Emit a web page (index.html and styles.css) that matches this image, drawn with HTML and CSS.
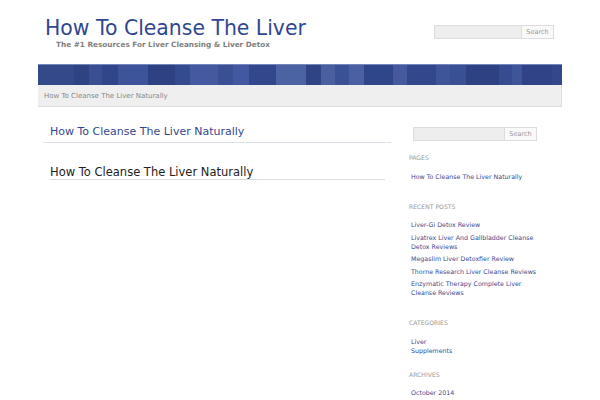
FILE: index.html
```html
<!DOCTYPE html>
<html lang="en">
<head>
    <meta charset="UTF-8">
    <meta name="viewport" content="width=device-width, initial-scale=1.0">
    <title>How To Cleanse The Liver</title>
    <link rel="stylesheet" href="styles.css">
</head>
<body>
    <div class="wrapper">
        <div class="header">
            <div class="branding">
                <h1 class="site-title">How To Cleanse The Liver</h1>
                <p class="site-desc">The #1 Resources For Liver Cleansing &amp; Liver Detox</p>
            </div>
            <form class="search search-header">
                <input type="text" class="search-input">
                <button type="button" class="search-btn">Search</button>
            </form>
        </div>

        <div class="banner"></div>
        <div class="crumbs">How To Cleanse The Liver Naturally</div>

        <div class="columns">
            <div class="main">
                <h2 class="page-title">How To Cleanse The Liver Naturally</h2>
                <h3 class="entry-title">How To Cleanse The Liver Naturally</h3>
            </div>

            <div class="sidebar">
                <form class="search search-side">
                    <input type="text" class="search-input">
                    <button type="button" class="search-btn">Search</button>
                </form>

                <div class="widget widget-first">
                    <h4>Pages</h4>
                    <ul>
                        <li><a href="#">How To Cleanse The Liver Naturally</a></li>
                    </ul>
                </div>

                <div class="widget">
                    <h4>Recent Posts</h4>
                    <ul>
                        <li><a href="#">Liver-Gi Detox Review</a></li>
                        <li><a href="#">Livatrex Liver And Gallbladder Cleanse Detox Reviews</a></li>
                        <li><a href="#">Megaslim Liver Detoxfier Review</a></li>
                        <li><a href="#">Thorne Research Liver Cleanse Reviews</a></li>
                        <li><a href="#">Enzymatic Therapy Complete Liver Cleanse Reviews</a></li>
                    </ul>
                </div>

                <div class="widget">
                    <h4>Categories</h4>
                    <ul class="tight">
                        <li><a href="#">Liver</a></li>
                        <li><a href="#">Supplements</a></li>
                    </ul>
                </div>

                <div class="widget widget-archives">
                    <h4>Archives</h4>
                    <ul>
                        <li><a href="#">October 2014</a></li>
                    </ul>
                </div>
            </div>
        </div>
    </div>
</body>
</html>
```

FILE: styles.css
```css
body {
    font-family: "DejaVu Sans", Verdana, sans-serif;
    margin: 0;
    background-color: #FFFFFF;
    color: #333;
}
.wrapper {
    width: 524px;
    margin-left: 38px;
}
.header {
    display: flex;
    justify-content: space-between;
    align-items: flex-start;
    padding-top: 16px;
    height: 64px;
    box-sizing: border-box;
}
.site-title {
    margin: 0 0 0 7px;
    font-size: 20.4px;
    line-height: 24px;
    font-weight: normal;
    color: #2f4790;
}
.site-desc {
    margin: 0 0 0 18px;
    font-size: 7.3px;
    line-height: 10px;
    font-weight: bold;
    color: #808080;
}
.search {
    display: flex;
    margin: 0;
}
.search-input {
    height: 14px;
    box-sizing: border-box;
    border: 1px solid #ddd;
    background: #eee;
    padding: 0;
    margin: 0;
}
.search-btn {
    height: 14px;
    box-sizing: border-box;
    border: 1px solid #ddd;
    border-left: none;
    background: #f9f9f9;
    color: #999;
    font-family: "DejaVu Sans", Verdana, sans-serif;
    font-size: 6.5px;
    padding: 0;
    margin: 0;
    width: 32px;
}
.search-header {
    margin-top: 9px;
    margin-right: 8px;
}
.search-header .search-input {
    width: 88px;
}
.banner {
    height: 21px;
    border-top: 1px solid #7486bb;
    box-sizing: border-box;
    background: linear-gradient(to right,
        #34498a 0 6.8%, #2f4383 6.8% 9.7%, #3a4f92 9.7% 12.3%,
        #30458a 12.3% 15.3%, #3d539a 15.3% 20.9%, #2e4283 20.9% 26.1%,
        #354b90 26.1% 29.1%, #4459a0 29.1% 34.3%, #3a4f94 34.3% 37.3%,
        #4258a0 37.3% 40.2%, #33488c 40.2% 45.5%, #4c63a3 45.5% 51.1%,
        #2f4385 51.1% 54%, #4a5fa0 54% 56.7%, #3b5196 56.7% 59.3%,
        #4a60a2 59.3% 62.2%, #30468a 62.2% 67.8%, #45599c 67.8% 70.5%,
        #33488c 70.5% 76%, #3f5599 76% 78.7%, #3a5095 78.7% 81.6%,
        #2e4283 81.6% 87.9%, #364b90 87.9% 90.5%, #3f559a 90.5% 92.4%,
        #2f4386 92.4% 98%, #33478a 98% 100%);
}
.crumbs {
    height: 22px;
    box-sizing: border-box;
    background: #efefef;
    border-bottom: 1px solid #ddd;
    border-right: 1px solid #ddd;
    padding-left: 6px;
    font-size: 7px;
    line-height: 22px;
    color: #888;
}
.columns {
    display: flex;
}
.main {
    width: 348px;
    padding-left: 5px;
}
.page-title {
    margin: 18px 0 0;
    padding: 0 0 3px 7px;
    border-bottom: 1px solid #dde0e6;
    font-size: 11px;
    line-height: 14px;
    font-weight: normal;
    color: #34478e;
}
.entry-title {
    margin: 22px 6px 0 7px;
    border-bottom: 1px solid #ddd;
    font-size: 11.5px;
    line-height: 14px;
    font-weight: normal;
    color: #222;
}
.sidebar {
    width: 140px;
    margin-left: 18px;
}
.search-side {
    margin: 20px 0 0 4px;
}
.search-side .search-input {
    width: 92px;
}
.widget {
    margin-top: 21px;
}
.widget-first {
    margin-top: 12px;
}
.widget-archives {
    margin-top: 15px;
}
.widget h4 {
    margin: 0;
    font-size: 6.1px;
    line-height: 10px;
    font-weight: normal;
    text-transform: uppercase;
    color: #999;
}
.widget ul {
    list-style: none;
    margin: 8.5px 0 0 2px;
    padding: 0;
    width: 128px;
}
.widget li {
    font-size: 6.3px;
    line-height: 9px;
    margin-bottom: 3.5px;
}
.widget ul.tight li {
    margin-bottom: 0;
}
.widget a {
    color: #3a4a8e;
    text-decoration: none;
}
```
